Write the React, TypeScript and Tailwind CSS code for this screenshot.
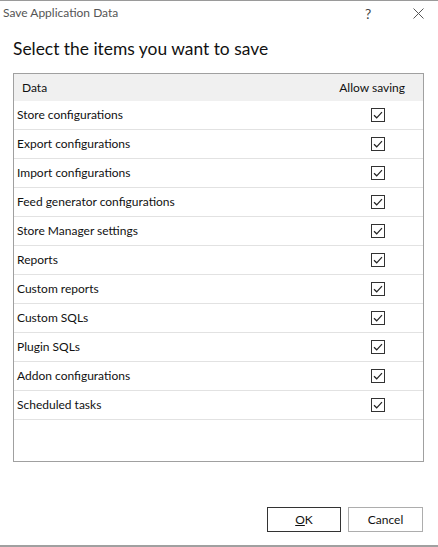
import React from 'react'

const items = [
    'Store configurations',
    'Export configurations',
    'Import configurations',
    'Feed generator configurations',
    'Store Manager settings',
    'Reports',
    'Custom reports',
    'Custom SQLs',
    'Plugin SQLs',
    'Addon configurations',
    'Scheduled tasks',
]

function Check() {
    return (
        <div className="w-[14px] h-[14px] border border-[#333] bg-white flex items-center justify-center">
            <svg width="10" height="8" viewBox="0 0 10 8" fill="none">
                <path d="M1 4.2 L3.7 6.8 L9 1.2" stroke="#222" strokeWidth="1.2" />
            </svg>
        </div>
    )
}

export default function App() {
    return (
        <div
            className="w-[438px] h-[547px] bg-white flex flex-col border-t border-[#9a9a9a] overflow-hidden"
            style={{ fontFamily: 'Lato, "Noto Sans", sans-serif' }}
        >
            <div className="h-[24px] flex items-center px-[3px] text-[12px] text-[#555]">
                <span className="flex-1">Save Application Data</span>
                <span className="w-[14px] text-[14px] text-[#444] mr-[34px]">?</span>
                <svg width="11" height="11" viewBox="0 0 11 11" className="mr-[11px]">
                    <path d="M0.5 0.5 L10.5 10.5 M10.5 0.5 L0.5 10.5" stroke="#555" strokeWidth="1" />
                </svg>
            </div>
            <div className="pl-[13px] pt-[12px] h-[48px] text-[17.4px] text-[#111] leading-[24px]">
                Select the items you want to save
            </div>
            <div className="ml-[13px] w-[411px] h-[389px] border border-[#a0a0a0] flex flex-col text-[12px] text-[#111]">
                <div className="h-[27px] bg-[#f0f0f0] flex items-center shrink-0">
                    <span className="pl-[8px] flex-1">Data</span>
                    <span className="pr-[18px]">Allow saving</span>
                </div>
                {items.map((it) => (
                    <div key={it} className="h-[29px] shrink-0 flex items-center border-b border-[#e2e2e2]">
                        <span className="pl-[3px] flex-1">{it}</span>
                        <div className="w-[85px] flex justify-center pr-[6px]">
                            <Check />
                        </div>
                    </div>
                ))}
            </div>
            <div className="flex-1 flex items-start justify-end pt-[45px] pr-[15px] gap-[7px] text-[12px] text-[#111]">
                <button className="w-[74px] h-[25px] border border-[#333] bg-white flex items-center justify-center">
                    <span><span className="underline">O</span>K</span>
                </button>
                <button className="w-[75px] h-[25px] border border-[#adadad] bg-white flex items-center justify-center">
                    Cancel
                </button>
            </div>
            <div className="h-[2px] bg-[#a0a0a0] shrink-0" />
        </div>
    )
}
